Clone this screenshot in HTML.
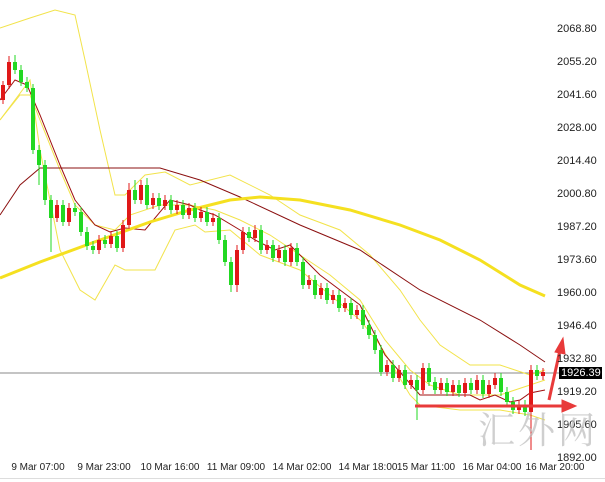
<!DOCTYPE html>
<html><head><meta charset="utf-8"><style>
body{margin:0;background:#fff;width:605px;height:482px;overflow:hidden;position:relative;font-family:"Liberation Sans","Noto Sans CJK SC",sans-serif}
.p{position:absolute;left:557px;font-size:11px;color:#222;line-height:12px}
.t{position:absolute;top:462px;font-size:10px;color:#222;white-space:nowrap;transform:translateX(-50%)}
#wm{position:absolute;left:478px;top:402px;font-size:37px;line-height:50px;color:#bbb;white-space:nowrap;letter-spacing:3px;font-family:"Noto Serif CJK SC","Noto Sans CJK SC",serif;opacity:.7}
</style></head><body>
<svg width="605" height="482" style="position:absolute;left:0;top:0">
<line x1="0" y1="373" x2="560" y2="373" stroke="#888" stroke-width="1"/>
<polyline fill="none" stroke="#f2e34a" stroke-width="1" points="0,28 30,18 55,10 75,15 85,60 100,130 115,195 125,195 145,175 165,172 190,185 230,175 270,195 300,215 340,230 370,255 400,290 420,320 440,345 470,365 500,365 530,375 545,370"/>
<polyline fill="none" stroke="#f2e34a" stroke-width="1" points="0,120 30,80 40,150 60,250 80,290 95,300 115,265 125,270 155,270 175,230 195,225 205,232 230,230 260,255 300,270 330,295 360,320 380,345 410,395 420,405 460,410 500,410 530,415 545,420"/>
<polyline fill="none" stroke="#f2e34a" stroke-width="1" points="0,120 20,95 30,95 40,120 60,170 75,205 95,225 115,230 130,215 160,205 190,205 215,210 240,220 270,235 300,255 330,275 360,300 385,340 410,370 430,385 460,395 500,395 530,385 545,380"/>
<polyline fill="none" stroke="#a01010" stroke-width="1" points="0,100 15,80 27,85 40,115 60,165 75,200 95,225 110,232 125,228 145,230 170,200 190,205 200,210 215,215 240,230 255,240 265,245 275,250 290,245 300,255 320,275 340,290 360,305 385,355 420,395 450,395 470,395 480,400 495,395 510,402 520,400 530,393 545,390"/>
<polyline fill="none" stroke="#8b1010" stroke-width="1" points="0,215 20,185 40,168 80,168 160,168 200,180 240,197 300,225 360,250 420,290 480,320 520,345 545,362"/>
<polyline fill="none" stroke="#f5e020" stroke-width="3" points="0,278 40,262 100,240 150,222 190,210 230,200 260,197 300,200 350,210 400,225 440,240 480,260 520,285 545,296"/>
<path fill="none" stroke="#e01818" stroke-width="1" d="M3 81V104M9 56V89M57 200V222M69 203V226M99 235V254M111 231V248M123 220V252M129 183V229M141 180V204M153 193V209M165 195V210M177 200V214M189 203V219M201 207V222M213 213V226M237 245V292M243 227V254M255 225V242M267 240V254M279 245V262M291 243V266M309 275V289M321 283V299M333 290V304M345 298V312M357 305V319M387 360V376M399 365V382M411 375V389M423 363V394M441 378V394M453 380V396M465 378V397M477 375V394M489 380V398M495 373V389M519 400V414M531 365V450M543 368V380"/>
<path fill="#e01818" d="M1 85h4v15h-4zM7 62h4v23h-4zM55 205h4v13h-4zM67 208h4v14h-4zM97 240h4v10h-4zM109 236h4v8h-4zM121 225h4v23h-4zM127 190h4v35h-4zM139 185h4v15h-4zM151 198h4v7h-4zM163 200h4v6h-4zM175 205h4v5h-4zM187 208h4v7h-4zM199 212h4v6h-4zM211 218h4v4h-4zM235 250h4v35h-4zM241 232h4v18h-4zM253 230h4v8h-4zM265 245h4v5h-4zM277 250h4v8h-4zM289 248h4v14h-4zM307 280h4v5h-4zM319 288h4v7h-4zM331 295h4v5h-4zM343 303h4v5h-4zM355 310h4v5h-4zM385 365h4v7h-4zM397 370h4v8h-4zM409 380h4v5h-4zM421 368h4v22h-4zM439 383h4v7h-4zM451 385h4v7h-4zM463 383h4v10h-4zM475 380h4v10h-4zM487 385h4v9h-4zM493 378h4v7h-4zM517 405h4v5h-4zM529 370h4v42h-4zM541 372h4v4h-4z"/>
<path fill="none" stroke="#22d822" stroke-width="1" d="M15 55V74M21 65V86M27 77V92M33 84V154M39 145V185M45 160V205M51 195V252M63 200V226M75 203V216M81 207V236M87 227V250M93 241V254M105 235V248M117 231V252M135 180V204M147 178V209M159 193V210M171 195V214M183 200V219M195 203V222M207 207V226M219 213V244M225 235V266M231 257V292M249 227V242M261 225V254M273 240V262M285 245V266M297 243V266M303 257V289M315 275V299M327 283V304M339 290V312M351 298V319M363 305V329M369 320V339M375 330V354M381 345V376M393 360V382M405 365V389M417 375V420M429 363V386M435 377V394M447 378V396M459 380V397M471 378V394M483 375V398M501 373V396M507 387V406M513 397V414M525 400V416M537 365V380"/>
<path fill="#22d822" d="M13 62h4v8h-4zM19 70h4v12h-4zM25 82h4v6h-4zM31 88h4v62h-4zM37 150h4v15h-4zM43 165h4v35h-4zM49 200h4v18h-4zM61 205h4v17h-4zM73 208h4v4h-4zM79 212h4v20h-4zM85 232h4v14h-4zM91 246h4v4h-4zM103 240h4v4h-4zM115 236h4v12h-4zM133 190h4v10h-4zM145 185h4v20h-4zM157 198h4v8h-4zM169 200h4v10h-4zM181 205h4v10h-4zM193 208h4v10h-4zM205 212h4v10h-4zM217 218h4v22h-4zM223 240h4v22h-4zM229 262h4v23h-4zM247 232h4v6h-4zM259 230h4v20h-4zM271 245h4v13h-4zM283 250h4v12h-4zM295 248h4v14h-4zM301 262h4v23h-4zM313 280h4v15h-4zM325 288h4v12h-4zM337 295h4v13h-4zM349 303h4v12h-4zM361 310h4v15h-4zM367 325h4v10h-4zM373 335h4v15h-4zM379 350h4v22h-4zM391 365h4v13h-4zM403 370h4v15h-4zM415 380h4v10h-4zM427 368h4v14h-4zM433 382h4v8h-4zM445 383h4v9h-4zM457 385h4v8h-4zM469 383h4v7h-4zM481 380h4v14h-4zM499 378h4v14h-4zM505 392h4v10h-4zM511 402h4v8h-4zM523 405h4v7h-4zM535 370h4v6h-4z"/>
<g stroke="#e83a3a" fill="#e83a3a">
<line x1="415" y1="406" x2="566" y2="406" stroke-width="3"/>
<polygon points="576,406 562,400 562,412"/>
<line x1="549" y1="400" x2="560" y2="350" stroke-width="3"/>
<polygon points="563,338 555,352 565,354"/>
</g>
</svg>
<div style="position:absolute;left:559px;top:367px;width:43px;height:12px;background:#000"></div>
<div class="p" style="top:23px">2068.80</div><div class="p" style="top:56px">2055.20</div><div class="p" style="top:89px">2041.60</div><div class="p" style="top:122px">2028.00</div><div class="p" style="top:155px">2014.40</div><div class="p" style="top:188px">2000.80</div><div class="p" style="top:221px">1987.20</div><div class="p" style="top:254px">1973.60</div><div class="p" style="top:287px">1960.00</div><div class="p" style="top:320px">1946.40</div><div class="p" style="top:353px">1932.80</div><div class="p" style="top:367px;color:#fff;left:561px">1926.39</div><div class="p" style="top:386px">1919.20</div><div class="p" style="top:419px">1905.60</div><div class="p" style="top:452px">1892.00</div>
<div class="t" style="left:38px">9 Mar 07:00</div><div class="t" style="left:104px">9 Mar 23:00</div><div class="t" style="left:170px">10 Mar 16:00</div><div class="t" style="left:236px">11 Mar 09:00</div><div class="t" style="left:302px">14 Mar 02:00</div><div class="t" style="left:368px">14 Mar 18:00</div><div class="t" style="left:426px">15 Mar 11:00</div><div class="t" style="left:492px">16 Mar 04:00</div><div class="t" style="left:555px">16 Mar 20:00</div>
<div style="position:absolute;left:0;top:478px;width:605px;height:1px;background:#ddd"></div>
<div id="wm">汇外网</div>
</body></html>
